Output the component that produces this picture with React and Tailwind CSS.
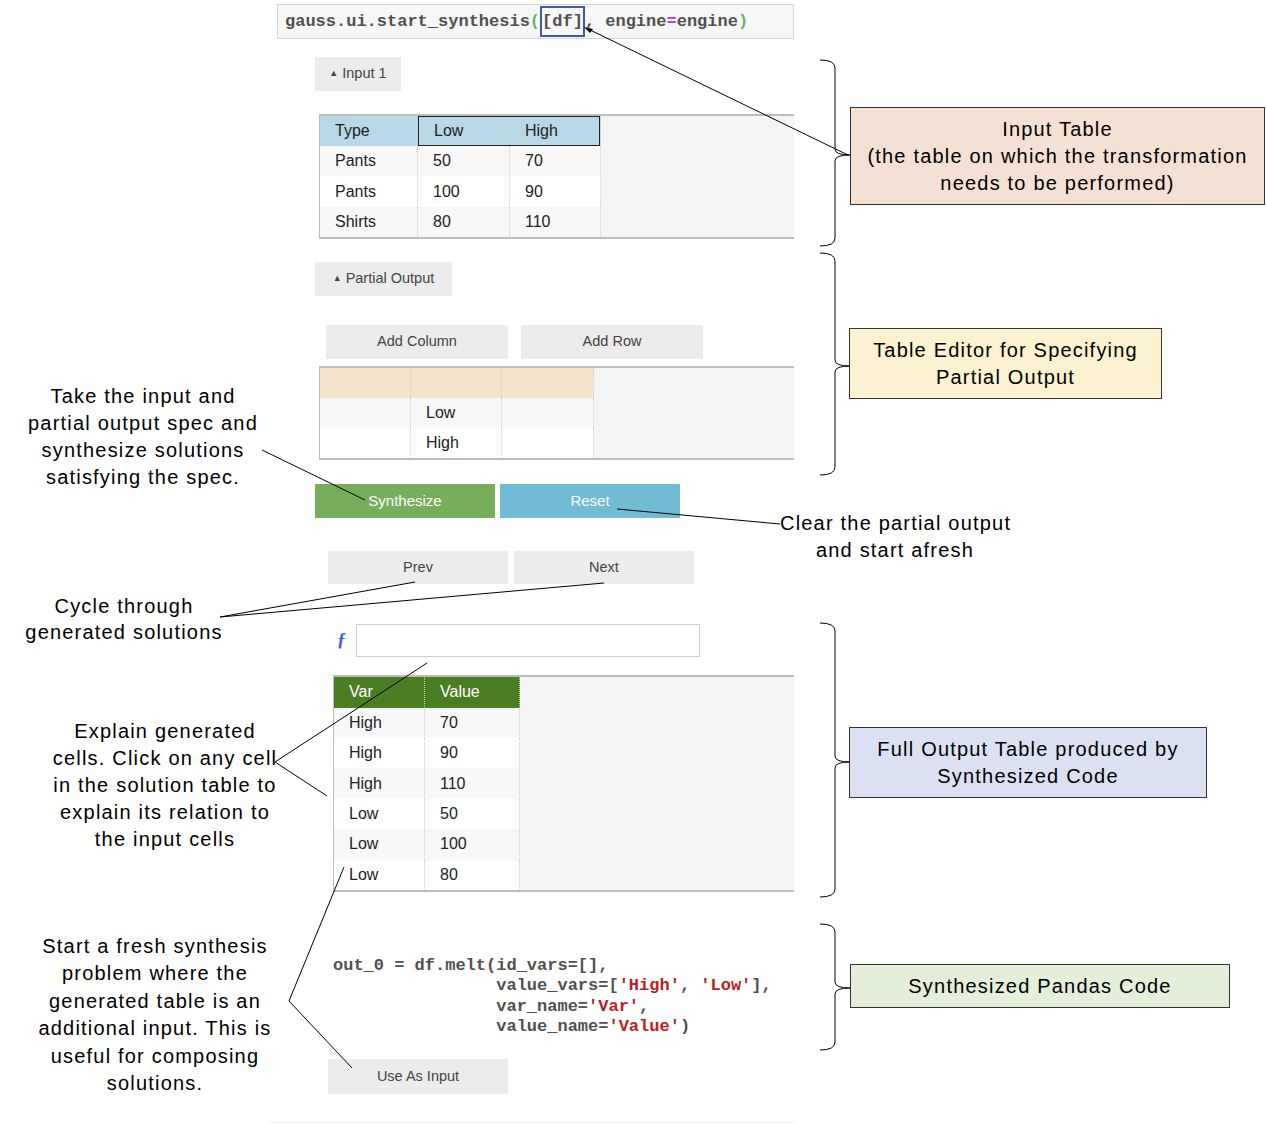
import React from "react";

const sans = { fontFamily: '"Liberation Sans", Arial, sans-serif' };

function GrayBtn({ children, className = "" }) {
  return (
    <div className={`flex items-center justify-center bg-[#ececec] text-[14.5px] text-[#444] ${className}`}>
      {children}
    </div>
  );
}

function Cell({ children, w, className = "", last = false }) {
  return (
    <div
      className={`flex h-full items-center pl-[15px] ${last ? "" : "border-r border-dotted border-[#cfcfcf]"} ${className}`}
      style={{ width: w }}
    >
      {children}
    </div>
  );
}

function Row({ cells, widths, bg, tall = 30.4 }) {
  return (
    <div className={`flex ${bg}`} style={{ height: tall }}>
      {cells.map((c, i) => (
        <Cell key={i} w={widths[i]}>
          {c}
        </Cell>
      ))}
    </div>
  );
}

function Annot({ lines, className = "", lh = "leading-[27px]" }) {
  return (
    <div className={`text-center text-[20px] tracking-[1.2px] text-black ${lh} ${className}`}>
      {lines.map((l, i) => (
        <div key={i} className="whitespace-nowrap">{l}</div>
      ))}
    </div>
  );
}

function Box({ lines, className = "" }) {
  return (
    <div className={`flex flex-col items-center justify-center border-[1.5px] border-[#333] text-[20px] leading-[27px] tracking-[1.2px] text-black ${className}`}>
      {lines.map((l, i) => (
        <div key={i} className="whitespace-nowrap">{l}</div>
      ))}
    </div>
  );
}

function brace(top, tip, bottom) {
  return `M820 ${top} Q835 ${top} 835 ${top + 8} L835 ${tip - 6} Q835 ${tip} 850 ${tip} Q835 ${tip} 835 ${tip + 6} L835 ${bottom - 8} Q835 ${bottom} 820 ${bottom}`;
}

export default function App() {
  const inW = [98, 92, 91];
  const partW = [91, 91, 92];
  const outW = [91, 95];
  const mono = { fontFamily: '"Liberation Mono", "Courier New", monospace' };
  return (
    <div className="relative h-[1125px] w-[1266px] overflow-hidden bg-white" style={sans}>
      <div className="flex">
        {/* Left annotations */}
        <div className="flex w-[277px] flex-col">
          <Annot className="mt-[383px] w-[286px]" lines={["Take the input and", "partial output spec and", "synthesize solutions", "satisfying the spec."]} />
          <Annot className="mt-[102px] w-[248px]" lh="leading-[26px]" lines={["Cycle through", "generated solutions"]} />
          <Annot className="mt-[73px] w-[330px]" lines={["Explain generated", "cells. Click on any cell", "in the solution table to", "explain its relation to", "the input cells"]} />
          <Annot className="mt-[80px] w-[310px]" lh="leading-[27.4px]" lines={["Start a fresh synthesis", "problem where the", "generated table is an", "additional input. This is", "useful for composing", "solutions."]} />
        </div>

        {/* Center UI */}
        <div className="flex w-[517px] flex-col">
          <div className="mt-[4px] flex h-[35px] items-center border border-[#d6d6d6] bg-[#f7f7f7] pl-[7px] text-[17px] font-bold text-[#505050]" style={mono}>
            <span>gauss.ui.start_synthesis</span>
            <span className="text-[#5cb85c]">(</span>
            <span className="flex h-[31px] items-center border-2 border-[#3b5ba5]">[df]</span>
            <span>, engine</span>
            <span className="text-[#a63be0]">=</span>
            <span>engine</span>
            <span className="text-[#5cb85c]">)</span>
          </div>

          <GrayBtn className="ml-[38px] mt-[18px] h-[34px] w-[86px] gap-[4px]">
            <span className="text-[9px]">▲</span>
            <span>Input 1</span>
          </GrayBtn>

          <div className="ml-[42px] mt-[23px] flex w-[475px] border-b-2 border-l border-t-2 border-[#bdbdbd] bg-[#f5f5f5] text-[16px] text-[#222]">
            <div className="flex flex-col">
              <div className="flex h-[30px] bg-[#b7d8e6]">
                <Cell w={inW[0]}>Type</Cell>
                <div className="flex border-[1.5px] border-[#222]">
                  <Cell w={inW[1] - 1}>Low</Cell>
                  <Cell w={inW[2] - 2} last>High</Cell>
                </div>
              </div>
              <Row widths={inW} bg="bg-[#f8f8f8]" cells={["Pants", "50", "70"]} />
              <Row widths={inW} bg="bg-white" cells={["Pants", "100", "90"]} />
              <Row widths={inW} bg="bg-[#f8f8f8]" cells={["Shirts", "80", "110"]} />
            </div>
          </div>

          <GrayBtn className="ml-[38px] mt-[23px] h-[34px] w-[137px] gap-[4px]">
            <span className="text-[9px]">▲</span>
            <span>Partial Output</span>
          </GrayBtn>

          <div className="ml-[49px] mt-[29px] flex gap-[13px]">
            <GrayBtn className="h-[34px] w-[182px]">Add Column</GrayBtn>
            <GrayBtn className="h-[34px] w-[182px]">Add Row</GrayBtn>
          </div>

          <div className="ml-[42px] mt-[7px] flex w-[475px] border-b-2 border-l border-t-2 border-[#bdbdbd] bg-[#f5f5f5] text-[16px] text-[#222]">
            <div className="flex flex-col">
              <Row widths={partW} bg="bg-[#f6e3cc]" tall={30} cells={["", "", ""]} />
              <Row widths={partW} bg="bg-[#f8f8f8]" tall={30} cells={["", "Low", ""]} />
              <Row widths={partW} bg="bg-white" tall={30} cells={["", "High", ""]} />
            </div>
          </div>

          <div className="ml-[38px] mt-[24px] flex gap-[5px]">
            <div className="flex h-[34px] w-[180px] items-center justify-center bg-[#76ae5b] text-[15px] text-white">Synthesize</div>
            <div className="flex h-[34px] w-[180px] items-center justify-center bg-[#71bbd3] text-[15px] text-white">Reset</div>
          </div>

          <div className="ml-[51px] mt-[33px] flex gap-[6px]">
            <GrayBtn className="h-[33px] w-[180px]">Prev</GrayBtn>
            <GrayBtn className="h-[33px] w-[180px]">Next</GrayBtn>
          </div>

          <div className="mt-[40px] flex items-center">
            <span className="ml-[60px] w-[19px] text-[18px] font-bold italic text-[#4a5bd8]" style={{ fontFamily: '"Liberation Serif", serif' }}>ƒ</span>
            <div className="h-[33px] w-[344px] border border-[#cccccc] bg-white" />
          </div>

          <div className="ml-[56px] mt-[18px] flex w-[461px] border-b-2 border-l border-t-2 border-[#bdbdbd] bg-[#f5f5f5] text-[16px] text-[#222]">
            <div className="flex flex-col">
              <Row widths={outW} bg="bg-[#4a7e22] text-white" cells={["Var", "Value"]} />
              <Row widths={outW} bg="bg-[#f8f8f8]" cells={["High", "70"]} />
              <Row widths={outW} bg="bg-white" cells={["High", "90"]} />
              <Row widths={outW} bg="bg-[#f8f8f8]" cells={["High", "110"]} />
              <Row widths={outW} bg="bg-white" cells={["Low", "50"]} />
              <Row widths={outW} bg="bg-[#f8f8f8]" cells={["Low", "100"]} />
              <Row widths={outW} bg="bg-white" cells={["Low", "80"]} />
            </div>
          </div>

          <pre className="ml-[56px] mt-[64px] text-[17px] font-bold leading-[20.3px] text-[#505050]" style={mono}>
            {"out_0 = df.melt(id_vars=[],\n                value_vars=["}
            <span className="text-[#ba2121]">'High'</span>
            {", "}
            <span className="text-[#ba2121]">'Low'</span>
            {"],\n                var_name="}
            <span className="text-[#ba2121]">'Var'</span>
            {",\n                value_name="}
            <span className="text-[#ba2121]">'Value'</span>
            {")"}
          </pre>

          <GrayBtn className="ml-[51px] mt-[22px] h-[35px] w-[180px]">Use As Input</GrayBtn>

          <div className="-ml-[7px] mt-[28px] h-px w-[524px] bg-[#eeeeee]" />
        </div>

        {/* Right annotations */}
        <div className="flex flex-1 flex-col">
          <Box className="ml-[56px] mt-[107px] h-[98px] w-[415px] bg-[#f5e1d3]" lines={["Input Table", "(the table on which the transformation", "needs to be performed)"]} />
          <Box className="ml-[55px] mt-[123px] h-[71px] w-[313px] bg-[#fcf2cf]" lines={["Table Editor for Specifying", "Partial Output"]} />
          <Annot className="-ml-[14px] mt-[111px] w-[230px]" lines={["Clear the partial output", "and start afresh"]} />
          <Box className="ml-[55px] mt-[163px] h-[71px] w-[358px] bg-[#dbe1f2]" lines={["Full Output Table produced by", "Synthesized Code"]} />
          <Box className="ml-[56px] mt-[166px] h-[44px] w-[380px] bg-[#e3efd8]" lines={["Synthesized Pandas Code"]} />
        </div>
      </div>

      {/* Connector lines and braces */}
      <svg className="pointer-events-none absolute left-0 top-0" width="1266" height="1125" viewBox="0 0 1266 1125">
        <g fill="none" stroke="#000" strokeWidth="1">
          <line x1="586" y1="28" x2="848" y2="155" />
          <line x1="262" y1="450" x2="365" y2="500" />
          <line x1="617" y1="509" x2="780" y2="524" />
          <line x1="415" y1="582" x2="220" y2="617" />
          <line x1="604" y1="583" x2="220" y2="617" />
          <line x1="427" y1="663" x2="275" y2="762" />
          <line x1="275" y1="762" x2="327" y2="796" />
          <line x1="344" y1="867" x2="289" y2="1001" />
          <line x1="289" y1="1001" x2="352" y2="1068" />
          <path d={brace(60, 155, 246)} />
          <path d={brace(253, 366, 475)} />
          <path d={brace(623, 762, 897)} />
          <path d={brace(924, 988, 1050)} />
        </g>
        <polygon points="584,27 593,29 590,33" fill="#000" />
      </svg>
    </div>
  );
}
